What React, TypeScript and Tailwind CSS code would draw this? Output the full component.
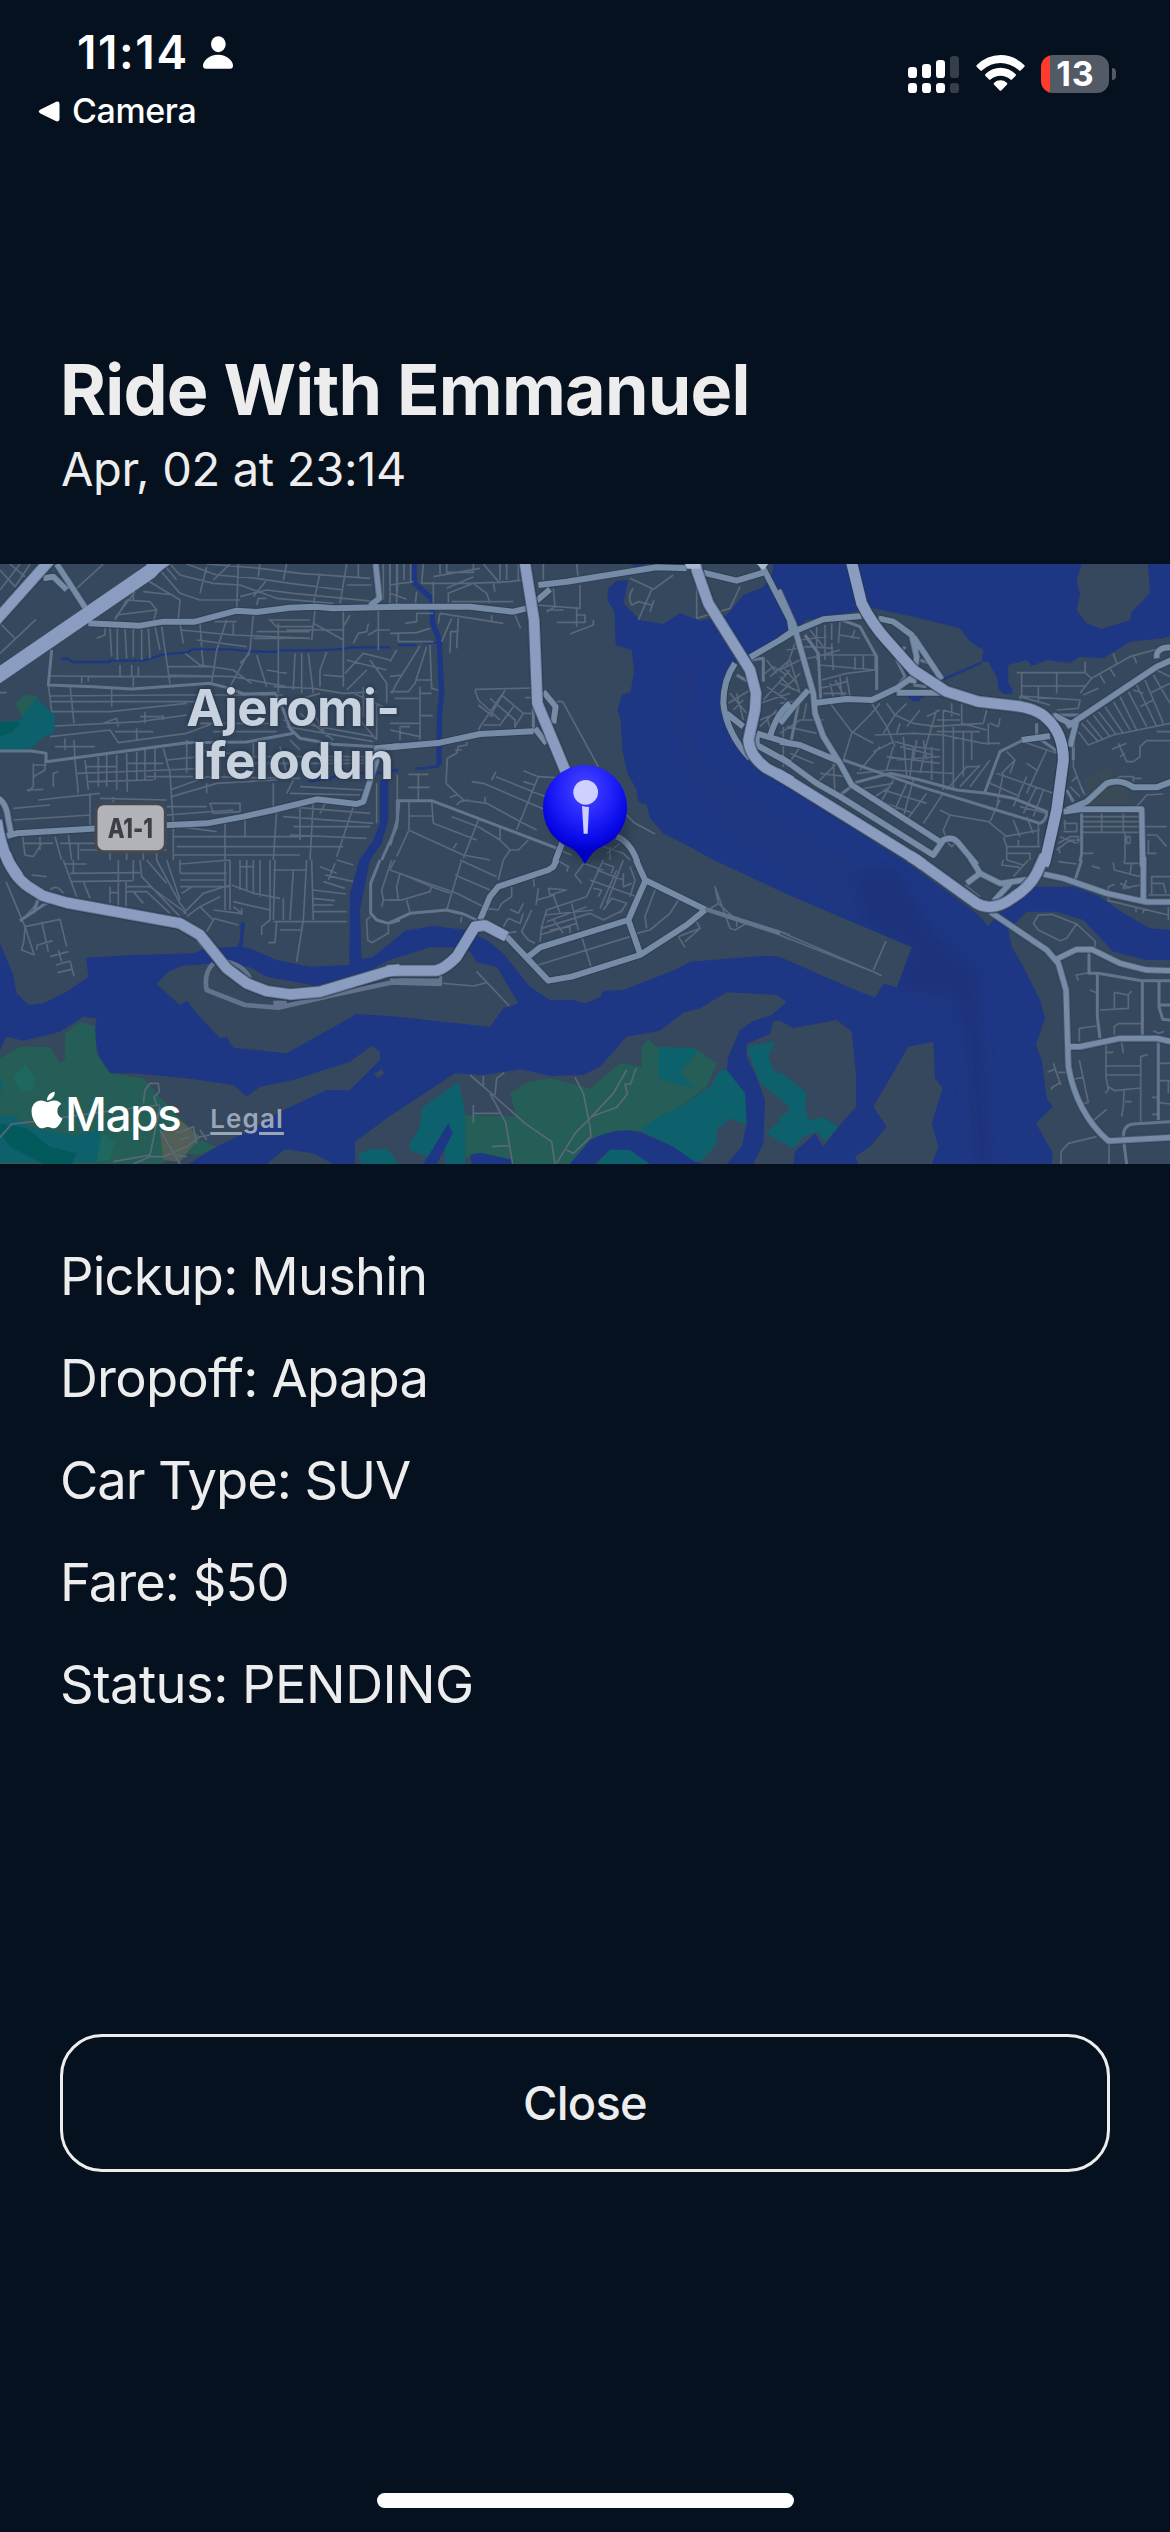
import { FaApple } from "react-icons/fa";

const LAND = "#36485d";
const WATER = "#1e3785";

// Map geometry is stored in sectors; every sector keeps its own local origin.
type Sector = {
  dx: number;
  dy: number;
  creeks?: string;
  green?: string;
  teal?: string;
  darkTeal?: string;
  sand?: string;
  lightGreen?: string;
  ponds?: string;
  lane: string;
  street: string;
  avenue: string;
  highway: string;
};

const sectors: Sector[] = [
  {
    dx: 0,
    dy: -12,
    creeks:
      "M183 296 L203 297 L220 306 H330 V302 H430 L490 283 L560 278 L580 268 H695 L750 274 L830 276 L835 271 H950 L1030 267 L1055 262 H1170 M925 665 L990 655 L1040 638 L1130 640 L1195 630",
    teal: "M0 485 L60 480 L110 415 L165 465 V490 L160 520 L130 530 L95 565 L0 580Z",
    green: "M45 430 L75 405 L110 408 L120 425 L105 450 L100 480 L75 482Z",
    darkTeal: "M0 485 H62 L38 515 L0 530Z",
    lane:
      "M0 30 L45 80 L90 12 M60 12 L0 90 M30 12 L75 50 M230 85 L310 12 M0 280 L108 178 M0 190 L45 235 M0 398 H20 " +
      "M510 12 L540 45 L640 70 L720 75 L830 115 L1000 130 M560 12 L650 45 L770 55 L870 70 L1030 90 M620 12 L780 25 L900 40 L1110 55 M480 30 L540 100 L600 120 H720 M715 12 L710 150 M780 12 L775 50 M1040 12 L1020 130 M960 40 L940 130 M860 12 L850 60 M440 60 L540 120 L535 180 M405 95 L345 175 M345 180 L380 120 L450 125 L470 150 L350 165 M400 90 V120 M470 150 L460 185 M720 110 L800 90 L880 100 L1130 125 M800 60 L760 110 M600 100 L620 20 M1150 12 V120 M1170 12 V140 M1190 12 V140 M430 95 L520 105 M490 12 L530 60 M690 12 L640 60 M770 135 L775 115 H800 M1040 75 H1115 M1075 12 V50 " +
      "M330 205 L335 290 M352 205 V300 M375 205 L380 295 M400 205 V290 M425 205 V300 M445 205 L450 295 M465 200 L480 270 M485 200 L510 372 M540 190 L550 250 M290 235 L315 225 V205 M540 210 L700 225 L930 235 M600 190 L605 260 M590 240 L740 260 M680 180 L650 270 L635 370 M760 165 L750 270 L690 380 M805 180 H930 M835 190 V400 M945 150 L935 240 M810 180 L830 200 H940 M1030 140 V380 M860 210 H1030 M940 190 L1030 240 M1050 165 L1030 200 M770 215 H930 M1170 210 H1130 L1105 225 M1135 140 V270 M1105 190 L1100 215 L1075 220 L1060 250 M645 185 H710 M700 190 V225 M760 235 H850 " +
      "M150 348 L500 350 L640 350 M210 375 L222 490 M335 385 V440 M148 408 L500 405 L850 405 M150 425 L600 425 M155 455 L330 455 L560 430 M165 498 L420 485 L560 465 M150 530 L330 510 L355 548 L560 520 L640 490 M145 375 L155 455 M400 350 V380 M265 350 V365 M245 350 V370 M500 320 H640 M505 345 L700 350 L860 380 M360 315 V350 M395 315 V350 M415 320 V350 M605 270 L610 320 M555 280 L600 315 L700 330 L740 360 L755 370 M770 285 L800 380 M885 280 L880 390 M905 280 V400 M925 280 L940 400 M980 275 L960 330 V380 M820 380 L940 385 L1030 400 L1130 395 M1040 300 L1160 330 M1035 340 L1090 280 L1170 300 M970 345 L1030 350 M1110 300 L1160 370 V430 M1040 390 L1100 330 M800 330 L860 340 M720 310 L750 280 M1060 400 L1150 440 M1090 380 V470 M420 470 H490 M435 455 V490 M310 490 L350 475 L355 500 M410 505 V540 M345 515 H460 M490 465 V480 " +
      "M100 610 V680 L85 695 M100 615 H140 M100 650 L135 630 V605 M160 680 V640 L175 635 M222 540 L225 600 L235 700 M165 560 H285 M195 535 V570 M255 600 L265 690 M295 590 V680 M320 585 V680 M350 585 V690 M380 580 L382 695 M410 575 V660 M435 570 V660 M465 565 V660 M490 565 L510 640 L515 720 M230 640 L500 630 L600 625 M265 665 L460 660 M115 720 L300 700 M80 690 L130 688 M440 650 L580 650 M510 690 L620 650 L900 655 M515 710 L650 670 L830 660 M270 700 V800 M40 745 L150 735 M40 780 L270 765 M500 740 L620 740 M630 730 H720 V755 L640 760Z M820 670 V750 M515 720 L520 790 M255 620 H350 M380 610 H490 M500 600 L600 590 M340 710 V735 M500 765 L700 750 M300 715 L500 720 M560 540 V640 M620 670 V700 " +
      "M68 830 L75 885 L100 890 M68 850 H160 M120 830 V870 M165 830 L185 900 M205 825 L215 900 M180 850 H500 M240 870 H500 M235 850 V900 M330 850 V900 M380 850 V900 M430 850 V900 M470 850 V900 M520 800 V900 M520 830 H900 M530 860 H1030 M520 885 H900 M675 790 V900 M735 780 V830 M830 755 L820 900 M900 745 V840 M940 725 L930 900 M860 740 L1110 760 M850 770 L1120 790 M880 800 H1110 M870 825 L1100 835 M980 720 L960 760 M1060 740 L1010 890 M1130 670 V790 M100 890 L125 850 M540 800 L650 815 " +
      "M900 680 L1090 690 M870 700 L1080 705 M880 660 L860 700 M600 490 H820 M640 515 H830 M730 590 H1120 M740 610 H1120 M850 480 L1120 530 M860 500 L1120 545 M960 560 V600 M870 540 L900 570 M1080 480 L1130 540 M900 460 L1000 540 M930 440 L980 530 M600 570 L760 590 M1130 430 V540 M660 560 V640 M760 550 V640 M840 560 L860 640 M980 600 H1130 M890 420 L960 400",
    street:
      "M155 270 L145 375 L280 380 L395 387 L630 370 L690 385 L730 402 L825 400 L850 450 L870 505 L900 535 L1000 553 L1130 560 M0 573 H95 L138 580 V605 L560 548 L740 546 L880 520 M1197 720 L1190 800 L1145 900",
    avenue:
      "M255 142 L205 65 L170 12 M130 55 L160 50 L200 90 M265 190 L420 197 L490 185 L585 185 L710 152 L770 156 L870 143 L945 140 L1000 145 L1200 140 M1127 12 L1138 115 L1110 137 M20 828 L50 820 L300 805 L620 790 L730 770 L820 750 L950 718 L1070 732 L1090 725 L1130 600 V565 L1200 558 M-5 715 Q20 730 25 780 L35 830",
    highway: "M500 0 L450 35 L0 343 L-20 357 M150 0 L0 168 L-20 190 M-10 780 Q0 850 25 905 L55 950",
  },
  {
    dx: 1170,
    dy: -12,
    creeks:
      "M147 618 L100 625 H75 M0 630 H22 M25 255 H80 M100 248 H145",
    lane:
      "M0 12 V70 M22 12 V100 M42 12 V60 M62 12 V70 M100 12 L95 70 H240 L360 65 L400 60 M130 65 V135 M130 50 L270 25 M150 12 V42 M170 12 V37 H250 V12 M175 130 V100 L250 70 L290 100 L300 130 M170 85 L250 50 M280 12 L330 70 M330 12 V60 M350 12 V60 M385 12 V60 M0 75 L70 65 M0 100 L50 118 M80 95 L75 140 M185 125 H370 M310 70 L315 95 " +
      "M0 220 L80 218 L120 205 M25 245 H130 M25 222 V245 M45 190 L80 185 V160 H130 M150 160 L340 190 M305 165 V185 M375 165 L392 205 M205 170 L200 265 M185 175 L155 245 M180 280 L182 215 H205 M150 160 L145 190 M0 305 L20 270 M90 258 L20 370 L5 400 M110 260 L75 370 L55 395 H0 M120 255 L125 385 L145 390 M90 380 V540 M15 415 H90 M0 490 H90 M90 400 H125 M90 467 H128 M30 500 V540 M0 510 L90 530 M75 360 H125 M0 350 L35 345 M30 500 H60 " +
      "M255 388 L425 384 M255 390 L265 420 L330 480 M300 415 L375 480 V505 M335 405 L400 460 H425 M335 405 L270 500 L265 512 M370 440 L330 495 H280 M400 460 L375 500 M265 435 L310 470 M345 390 L300 470 M405 413 H425 M500 425 H518 L625 620 M540 222 L610 195 V180 M560 140 V200 M500 187 H585 V165 H560 M440 135 L570 145 V75 M470 150 H520 M460 12 V60 M560 12 L565 60 M490 85 L495 140 L470 155 M720 55 L790 88 L850 45 M785 88 L745 180 M730 85 Q710 110 725 135 L745 125 L785 135 M792 120 L780 155 M920 70 V175 L1020 145 L1050 80 " +
      "M22 645 V720 M85 645 V720 M55 643 H115 M55 682 H118 M57 725 V810 L20 890 M125 725 L130 790 L260 840 M60 768 H125 M60 812 L220 885 L300 900 M185 770 L265 800 L330 840 M330 800 V840 L360 870 H385 L415 840 M265 780 L220 895 M360 870 L340 900 M230 545 V555 L205 560 L200 580 L172 595 L168 670 L220 720 L290 730 L400 790 L440 810 M245 665 L280 670 L480 755 M305 660 L318 635 M318 650 L440 700 L480 715 M400 632 L445 650 L380 810 M445 650 L540 655 M400 665 L435 675 M200 735 L210 725 L240 720 M285 710 V730 M180 712 L200 705 M195 570 H215 M200 850 L190 865 M460 850 L545 885 M710 765 L735 790 L795 822 M640 860 L700 880 L720 900 M650 880 L690 850 M660 860 V900 " +
      "M1120 420 L1200 330 M1130 380 L1190 420 M1140 350 L1200 300 M1110 480 L1200 440 M1015 430 L1080 390 M1020 400 L1070 460 M1040 400 L1060 480 M1110 500 L1160 450 M1130 470 L1150 540 M1180 500 V620 M1125 340 L1150 320 L1190 345 M1110 430 L1200 400 M1030 450 L1060 420 M1130 300 L1160 340",
    street:
      "M0 855 L22 780 V722 H125 L330 800 L510 868 M1085 300 L1120 295 V365 M1040 345 L1075 365 M430 440 V520",
    avenue:
      "M0 140 H240 L370 155 L410 145 M0 562 L150 548 L270 522 L430 514 M445 75 L530 65 L800 22 L890 25 M440 122 L480 88 M940 38 L1040 62 L1130 35 M1115 15 L1200 180 L1205 215 L1170 240 L1080 292 M1035 310 Q1000 360 1000 430 Q1010 520 1080 595 M1200 430 Q1160 460 1140 530 M1100 520 L1200 550 M1100 520 V555 L1200 610 M1010 460 L1060 500 M460 395 L497 440 L490 490 M435 505 L470 550 M518 845 L495 905 M680 830 Q720 845 742 905",
    highway:
      "M403 0 L432 180 L442 430 L525 630 L545 670 M915 0 L920 30 L955 130 L1080 330 L1098 400 L1095 450 L1075 540 Q1080 590 1130 625 L1205 665",
  },
  {
    dx: 2340,
    dy: -12,
    creeks: "M490 358 L605 308 M345 403 H440 M385 412 H430 M395 420 H420",
    sand: "",
    lane:
      "M0 330 L60 300 L110 290 L180 270 M20 270 L80 260 L160 265 M0 370 L70 400 M0 400 L60 340 M30 300 L60 400 M60 240 L140 230 M90 210 L130 260 M110 200 V300 M135 195 V300 M155 190 V240 M180 185 L175 250 M180 225 L240 235 M215 235 L225 210 M120 285 H285 M120 315 L285 330 M125 360 L200 340 L285 330 M120 385 L200 365 M150 370 L160 410 M200 350 L210 410 M130 400 L200 400 M285 285 V330 M225 290 V330 M250 285 V330 M155 250 L160 330 M165 360 L195 410 M180 350 L185 410 M0 350 L40 390 M10 320 L50 370 M45 250 L20 320 " +
      "M0 520 L60 480 L130 480 M20 500 L110 520 M0 430 L70 420 M30 580 L100 610 M60 560 L20 620 M110 670 L180 600 M160 610 L165 700 M120 640 L200 650 M80 430 L70 480 " +
      "M150 430 L215 515 L280 550 M215 520 L270 465 M215 520 L190 600 M275 430 L320 500 L345 560 M320 430 L345 465 L400 490 L470 500 M380 430 L345 465 L310 520 M300 430 L270 465 M285 525 L400 520 L490 525 L610 550 H660 M490 450 V690 M470 450 L440 550 L420 640 M520 500 V690 M545 430 V490 L620 510 M550 515 V650 M575 515 V600 M490 450 L540 465 M450 500 L610 490 M470 515 H600 M625 490 V555 M620 450 L610 490 M630 490 L655 500 L660 475 M345 545 L400 560 L480 570 M320 590 L400 600 L480 610 M340 560 L320 630 M370 530 L380 650 M400 560 L390 650 M430 540 L440 600 M280 575 L340 545 M360 560 L460 585 M350 600 L480 590 M410 540 L400 600 M500 690 L560 620 H600 M540 680 L600 615 M570 680 L630 600 M240 630 L300 560 M230 640 L330 630 L520 640 M440 470 L480 450 M470 480 H540 M515 430 V470 M360 490 L350 520 M455 560 V660 M420 450 L380 500 " +
      "M225 690 L340 670 M300 730 L340 660 M270 720 L330 680 M340 760 L380 670 M380 780 L440 700 M290 720 L400 760 M310 690 L440 730 M400 660 L370 770 M430 790 L490 700 M510 765 L625 785 L680 830 M510 765 L490 810 L500 840 M480 750 L510 765 M670 830 L680 860 V900 M680 860 H780 M675 830 L780 810 M715 840 V860 M700 780 L720 830 M740 770 L760 820 M680 880 H750 V900 M630 785 L660 720 M650 640 L820 700 M630 670 L720 710 M670 640 L650 740 M705 600 L665 640 M680 575 L705 600 L690 640 M740 610 L770 630 M800 570 L740 700 M740 650 L700 740 M770 680 L730 760 M790 690 L760 770 M730 545 L830 580 M720 740 L800 760 M495 840 L515 860 L530 845 M775 790 V860 " +
      "M710 338 H915 L935 355 L900 400 M725 340 V410 M725 378 H915 M830 338 V400 M775 380 V430 M720 420 V408 L900 420 L895 445 L830 450 M720 410 L810 435 M935 355 L1050 290 L1150 262 M1000 280 L1010 310 M1060 285 L1070 310 M960 345 L975 370 M990 325 L1005 350 M915 338 V305 M910 405 L955 385 " +
      "M905 490 L955 545 M925 555 L1000 525 L1170 490 M920 480 L970 540 M940 465 L990 530 M955 455 L1010 525 M975 440 L1030 520 M1000 425 L1050 510 M1020 410 L1070 510 M1045 395 L1100 500 M1070 375 L1130 500 M1095 360 L1150 490 M1120 345 L1170 430 M895 515 L925 555 M1060 390 L1090 400 M1110 400 L1170 370 M1080 440 L1120 420 M1130 330 L1170 350 M1130 515 H1170 M995 568 L1040 550 M1020 590 L1035 580 M1015 550 L1040 605 L1060 605 L1080 590 V560 L1100 542 H1170 M880 560 V620 L910 700 M1005 660 L1020 650 H1060 V665 M1060 655 H1085 M870 680 L900 710 M875 665 L890 650 L915 705 " +
      "M900 770 H1080 M900 785 H1080 M900 800 H1080 M900 817 H1080 M965 760 V817 M1030 760 V817 M1035 820 V900 M850 790 H890 V815 H850 M855 780 V810 M840 830 L890 850 M830 870 L870 840 H900 M835 850 L870 830 H895 V850 M1040 830 H1050 V850 H1040Z M1095 800 H1160 M1100 825 H1130 L1160 860 M910 880 H940 M1100 880 H1130 M1070 740 L1100 705 L1150 702 M1105 840 V880 M840 880 L835 860",
    street:
      "M185 180 L240 200 L290 290 V390 M75 225 L115 280 L122 420 M190 600 L290 635 L420 680 L600 735 L780 790 Q800 780 800 755 L700 715 L620 700 L530 690 L420 660 L330 640 L225 668 M615 695 L660 575 L730 540 M905 760 V880 L900 905 M60 410 L30 560 M180 705 L220 675 M375 260 L350 300 L375 350 L350 380 M420 300 L450 310 L480 350 M400 375 L440 380 M770 490 V530 L840 580 M815 465 H920 M880 500 V600 M860 690 L880 725",
    avenue:
      "M-5 90 L40 190 L80 330 L100 400 L105 460 L130 530 L180 610 L215 675 L480 845 M0 240 L40 215 L130 178 L245 168 M295 175 L340 185 L395 225 L410 290 L400 370 M400 230 L440 290 L485 358 M110 428 L200 417 L275 420 L350 385 L400 350 M350 398 H485 M85 390 L40 440 L0 490 M0 545 L60 555 L180 605 M0 590 L110 670 L180 710 L460 885 L490 840 Q520 825 540 855 L590 915 M1175 300 L1130 320 L860 500 M1130 295 Q1125 262 1175 262 M725 540 L810 528 M890 480 L870 560 M820 465 L870 490 M850 755 L900 748 H1085 L1088 920 M860 750 L920 725 L980 670 Q1020 655 1060 682 H1130 L1175 665",
    highway:
      "M-10 640 L0 646 L410 900 L430 915 M213 0 L245 130 Q275 190 320 240 L400 330 L500 395 L595 425 L700 437 Q770 445 800 475 Q850 520 850 600 L830 750 L795 905 L790 915",
  },
  {
    dx: 0,
    dy: 888,
    green:
      "M0 595 L60 560 L150 560 L180 610 L195 600 V520 L240 485 L285 500 L290 580 L330 640 L430 655 L480 710 L545 780 L600 840 L650 860 L600 885 L550 880 L480 912 H0Z",
    teal:
      "M0 765 L50 770 L80 800 L240 830 L300 850 L290 905 H0Z M0 650 L10 680 L0 700Z M200 830 L300 810 L300 880 L180 870Z M1075 880 L1110 868 H1165 L1195 912 H1085Z",
    darkTeal: "M0 790 L80 805 L150 860 L230 880 L215 912 H130 L30 860 L0 820Z",
    lightGreen: "M40 650 L75 615 L105 650 L100 690 L60 695Z M310 820 L345 850 L330 900 L290 905 L300 850Z",
    sand: "M480 820 L540 780 L600 830 L540 905 L490 900Z",
    lane:
      "M190 0 L230 110 M220 0 V40 M190 12 H260 M210 40 L420 38 M210 65 L400 62 M250 65 L270 115 M355 40 V140 M378 60 V140 M330 80 V130 M330 98 H355 M400 0 V60 M355 0 V40 M380 80 H450 L560 160 M420 0 L425 50 L540 170 M380 95 H440 L510 160 M400 95 L430 130 M440 0 L500 70 M470 0 L540 130 L555 150 M500 0 L540 120 M540 12 L690 0 M540 40 H680 M540 60 H680 M540 80 H690 M545 100 L580 78 M550 160 L610 100 L690 75 M560 170 L600 140 L660 110 M600 140 L640 180 L620 215 M675 0 V150 M690 0 V150 M720 0 V90 M740 0 V90 M720 20 H760 M760 0 V100 M780 0 V110 M810 0 V180 L785 200 V225 M695 75 L760 100 L840 115 M700 125 L810 150 M700 140 L725 160 M725 145 V165 M640 150 L720 160 M640 175 L715 195 M820 30 H920 M825 0 L820 180 M850 115 V180 M880 30 L870 180 M920 0 L910 180 L890 305 M935 0 L940 180 M820 185 H1040 M830 185 L825 248 H805 M840 210 H905 M940 155 H1040 M940 135 H1000 M940 115 L1005 122 M940 90 L1038 102 M970 65 L1035 85 M975 45 L1060 65 M960 20 L1010 40 M1010 0 L1060 15 M1005 10 L985 60 M540 0 V40 M590 240 L605 262 " +
      "M18 65 L75 200 L103 285 M62 185 L120 120 M75 200 L180 178 L200 260 M125 185 L145 275 M110 270 L112 255 L158 242 M150 290 L205 275 M175 270 L185 305 M168 315 L210 303 L222 348 M172 338 L215 328 M75 200 L72 240 L65 270 L103 285 M95 45 L140 50 M150 90 Q170 70 190 100 M1165 195 V220 L1115 248 L1103 240 L1100 180 L1112 168 M1175 0 L1145 90 L1150 120 H1200 M1150 120 L1145 140 " +
      "M0 832 L35 792 L100 785 L350 750 L480 735 M430 730 L435 690 L450 670 H475 L478 695 L462 712 L470 735 M480 740 L450 885 L340 905 M450 890 L400 912 M480 810 L540 912 M450 890 H490 L560 860 L600 830 L630 825 M530 820 L580 800 L590 850 M540 840 L570 830 M600 810 L620 840 M530 885 L560 890",
    street:
      "M1140 0 L1112 70 V160 L1130 180 L1165 190 L1200 180 M100 160 L115 115 M60 182 L130 135 L150 125",
    avenue: "",
    highway: "M15 -20 Q40 50 85 80 L130 108 L200 128 L540 190 L600 225 L680 325 L740 370 L800 393 L870 403 L960 395 L1170 332 L1200 328",
  },
  {
    dx: 1170,
    dy: 888,
    green:
      "M360 700 L410 668 L480 655 L600 685 L690 610 L755 620 V560 L775 538 L800 560 L915 565 L980 610 L950 680 L870 740 L750 812 L680 815 L610 835 L540 912 H365 L300 890 H222 V765 L380 770Z",
    teal:
      "M805 563 H915 L920 580 L870 635 L910 685 L805 655Z M750 812 L800 775 L870 740 L960 680 L990 630 L1010 630 L1065 700 L1070 795 L1020 775 L980 810 V850 L940 900 L900 905 L850 860Z M58 850 L90 800 L95 745 L205 665 L225 750 V912 H165 V870 L110 890 L60 870Z M1070 560 L1155 543 L1135 590 L1150 630 L1200 660 V740 L1110 670Z M1200 755 L1128 820 L1200 860Z M620 912 L660 870 L720 868 L780 912Z M-5 870 L25 912 H-5Z",
    ponds:
      "M540 912 L600 840 Q690 795 760 820 L850 860 L915 905 L940 912 H780 L720 870 L660 868 L615 912Z M100 912 L175 790 L188 820 L140 912Z M240 885 L270 878 L370 900 V912 H245Z",
    lane:
      "M0 30 L200 100 L300 150 M215 0 L170 150 M340 0 L325 60 M210 0 L320 50 M0 120 H35 L120 95 L125 80 M50 120 L60 158 M30 40 L20 80 L25 120 M195 45 L300 90 M30 40 L125 80 L180 100 M0 28 L15 0 M365 80 V110 L335 130 L325 150 L295 145 M430 55 L433 80 M445 85 L438 135 M400 130 L385 160 L360 148 M425 150 L395 215 L415 240 L435 250 M340 200 L355 175 L390 190 L400 160 M350 220 L380 215 M475 85 L530 90 L480 105Z M490 105 L510 160 M440 120 L495 105 M450 245 L455 200 L470 150 L590 110 M465 165 L610 150 M490 180 L520 220 M455 205 L600 160 L640 180 L700 150 M545 130 L565 210 M480 210 L540 200 V220 M470 185 L590 140 M450 225 L560 190 M500 0 L535 20 L530 35 M580 12 L555 45 L575 70 M590 110 L640 0 M600 60 L740 110 M620 30 L700 60 M650 130 L700 0 M630 145 L680 30 M610 85 L635 90 L625 110 M640 150 L665 115 L710 130 L690 160 M700 40 V80 L725 70 M720 20 L735 60 L720 110 M640 10 L670 20 L665 40 M580 10 L640 30 " +
      "M445 315 L720 230 M575 230 L603 320 M740 220 L780 210 L840 160 L865 120 M770 205 L765 170 L795 90 M865 230 L885 262 M865 230 L930 205 L920 185 M885 245 L930 205 M955 150 L985 130 L975 80 L1020 205 L1035 210 L1070 190 M985 130 L1040 180 V200 M260 335 L358 438 M160 370 L250 378 L290 368 M215 170 L212 188 M1160 210 L1200 225 M1150 215 L1200 238 " +
      "M240 645 L315 710 L405 790 L485 845 L495 912 M280 648 V680 M300 700 L347 788 L368 912 M315 705 L320 655 L343 638 M250 735 V790 M250 760 H330 M305 860 L355 857 M555 652 L580 700 L600 800 L603 830 L550 880 L530 870 M500 910 L555 820 L600 775 L670 700 L710 630 M600 772 L680 742 L712 702 L705 672 H722 L738 625",
    street: "M0 188 L60 160 L170 150 L220 162 L260 180 M0 360 H155 M0 370 L155 374 M152 345 V375 M945 145 L1165 215 M950 148 L1165 218",
    avenue:
      "M500 0 L490 20 L475 30 L325 80 L300 110 L270 180 M350 230 L475 362 L545 350 L750 285 L890 195 L945 150 M738 0 L765 60 L945 148 M765 65 L715 180 L750 280 M715 180 L450 262 L412 292",
    highway: "M-10 332 H135 Q160 330 200 290 L255 200 L285 196 L350 230",
  },
  {
    dx: 2340,
    dy: 888,
    teal: "M0 635 L80 700 L75 745 L85 780 L130 772 L175 800 L135 843 L110 815 L70 830 L40 865 L0 845 V770 L30 750 L0 700Z",
    lane:
      "M0 215 L280 335 L305 347 M0 226 L280 335 M280 330 L318 243 M760 190 L775 165 L815 163 L890 192 L860 235 L840 242 L775 210Z M890 192 L945 243 V268 M555 75 L600 110 M670 0 L665 15 L720 22 M680 0 L730 15 M700 50 L745 0 M835 5 L890 12 M935 18 L960 25 M1000 8 L1003 30 L1080 50 M1050 40 L1055 10 M1033 0 V10 H1085 M985 125 V80 L1005 73 M1020 70 L1050 85 M1040 60 L1030 85 L1080 75 M985 122 L1060 140 L1165 165 M1068 145 V157 M1090 148 V160 M1115 105 V50 H1170 M1115 70 H1150 L1158 100 M1105 105 H1170 M1165 140 V180 " +
      "M895 362 L888 345 L930 338 M1003 445 V397 L1045 405 V445 L960 450 M1045 405 L1055 393 M930 390 L950 398 M898 545 V505 L950 498 M1003 525 V500 L1015 491 H1085 M978 550 V650 L985 690 L975 700 M980 577 H1000 M1025 548 L1030 580 M980 618 H1080 M980 645 H1080 M985 680 L1005 692 L1080 684 M1082 785 V590 L1103 584 M1032 692 L1030 740 L1025 770 M1035 725 H1055 M1140 610 H1170 M1140 662 H1170 M1115 712 H1135 M1115 763 H1135 M1140 728 L1170 732 M898 600 L925 727 L905 732 M880 657 L908 653 M930 790 L980 748 M820 610 L842 675 M802 637 L825 628 M835 637 H860 M815 690 V683 L840 668 M843 912 V875 L865 850 L950 830 M987 850 V912 M1120 512 L1135 520 L1152 515 M1165 665 V700",
    street:
      "M885 60 L905 0 M927 275 V340 L955 340 L1085 362 H1170 M952 340 V470 L960 535 M1087 360 V530 M1137 365 V440 L1148 478 L1170 480 M1140 435 H1170 M1135 545 V780 M1030 830 Q1030 795 1060 792 L1170 785 M1032 850 L1040 912",
    avenue:
      "M572 -5 L600 40 L660 70 L745 58 M560 70 L600 40 M640 125 L690 70 M790 42 L850 55 L980 100 L1100 126 H1175 M1090 -10 V120 M630 155 L800 270 L835 310 L858 390 L865 620 Q890 760 985 843 L1175 832 M830 297 L890 268 H935 L1020 310 L1100 330 L1175 332 M870 560 H900 L1020 535 H1130 L1175 545",
    highway: "M390 -12 L410 0 L590 130 Q640 158 700 112 Q750 80 770 40 L795 -15",
  },
];

const lagoon =
  "1885,48 1850,50 1825,73 1822,108 1843,143 1847,243 1895,258 1902,318 1892,383 1865,393 1853,438 1862,468 1867,558 1882,628 1910,678 1915,713 1940,723 1950,763 1990,808 2070,848 2140,888 2370,995 2735,1150 2690,1270 2650,1258 2625,1300 2580,1283 2340,1178 2290,1175 2070,1193 2030,1215 1870,1278 1810,1280 1800,1300 1755,1318 1720,1308 1650,1308 1590,1268 1510,1168 1460,1128 1398,1098 1300,1086 1215,1100 1170,1138 1120,1178 1085,1186 1080,1038 1110,888 1145,838 1165,768 1165,648 1140,648 1140,778 1120,828 1078,888 1050,988 1048,1203 930,1208 830,1188 750,1153 728,1148 735,1075 722,1075 720,1125 712,1148 620,1153 580,1168 400,1173 258,1181 265,1238 200,1283 130,1318 85,1323 50,1288 40,1233 0,1138 0,1458 20,1418 70,1430 180,1403 250,1358 290,1363 282,1418 300,1488 330,1528 400,1528 560,1543 700,1563 740,1598 780,1568 880,1548 1050,1493 1115,1445 1140,1463 1140,1488 1050,1578 980,1578 850,1638 740,1703 650,1748 565,1800 800,1800 855,1756 940,1768 1000,1800 1065,1800 1065,1733 1170,1656 1365,1528 1450,1533 1565,1516 1650,1536 1750,1533 1800,1508 1880,1418 1980,1400 2050,1346 2100,1333 2180,1285 2330,1293 2360,1313 2315,1353 2255,1373 2220,1398 2185,1478 2180,1518 2235,1588 2240,1678 2225,1748 2180,1800 2260,1800 2290,1738 2295,1608 2265,1528 2240,1478 2240,1440 2310,1410 2320,1370 2340,1370 2380,1393 2510,1368 2555,1403 2568,1528 2568,1628 2520,1683 2470,1748 2445,1708 2385,1763 2380,1800 2575,1800 2565,1778 2610,1748 2660,1688 2620,1628 2725,1448 2800,1433 2805,1543 2828,1573 2795,1678 2815,1748 2795,1800 3155,1800 3158,1768 3108,1678 3158,1628 3140,1603 3125,1488 3108,1443 3135,1363 3120,1308 3070,1208 3035,1148 3025,1098 3080,1043 3170,1043 3250,1068 3340,1163 3440,1188 3510,1188 3510,1098 3450,1093 3370,1048 3300,998 3220,968 3100,968 2990,1053 2965,1086 2930,1048 2720,895 2340,655 2250,593 2200,528 2160,438 2170,338 2210,293 2130,163 2100,170 2040,148 1990,180 1920,168 1870,118";

const harbour =
  "2320,0 2315,33 2290,70 2230,93 2180,153 2145,165 2210,290 2250,278 2360,218 2420,168 2560,143 2620,133 2740,158 2880,193 2910,233 2950,258 2945,293 2965,293 2990,338 2995,373 3010,390 3037,390 3037,375 3025,358 3025,303 3080,288 3095,306 3140,288 3210,296 3240,278 3310,283 3390,233 3490,223 3510,215 3510,0";

const island =
  "3245,0 3230,50 3240,90 3230,138 3260,178 3305,195 3390,168 3395,143 3450,88 3443,0";

const peninsula =
  "470,1260 505,1223 545,1206 650,1198 750,1210 800,1238 950,1266 1100,1223 1170,1188 1290,1150 1370,1150 1410,1163 1430,1195 1490,1208 1555,1318 1510,1333 1470,1388 1170,1356 1070,1350 860,1468 700,1451 680,1418 660,1423 590,1348 560,1310 540,1323";

type LayerKey = Exclude<keyof Sector, "dx" | "dy">;

function Layer({ k, stroke, width, fill, opacity }: { k: LayerKey; stroke?: string; width?: number; fill?: string; opacity?: number }) {
  return (
    <g fill={fill ?? "none"} stroke={stroke ?? "none"} strokeWidth={width} strokeLinejoin="round" opacity={opacity}>
      {sectors.map((s, i) =>
        s[k] ? <path key={i} d={s[k]} transform={`translate(${s.dx} ${s.dy})`} /> : null,
      )}
    </g>
  );
}

function RideMap() {
  return (
    <svg viewBox="0 0 3510 1800" className="block h-[600px] w-full" fontFamily="Inter, sans-serif">
      <defs>
        <radialGradient id="pin" cx="0.5" cy="0.25" r="0.62">
          <stop offset="0" stopColor="#4a4aff" />
          <stop offset="0.5" stopColor="#2222fb" />
          <stop offset="0.85" stopColor="#0808e6" />
          <stop offset="1" stopColor="#0000c4" />
        </radialGradient>
        <filter id="soft" x="-20%" y="-20%" width="140%" height="140%">
          <feGaussianBlur stdDeviation="14" />
        </filter>
      </defs>
      <rect width="3510" height="1800" fill={LAND} />
      <g fill={WATER}>
        <polygon points={lagoon} />
        <polygon points={harbour} />
        <path d="M1890 0 H1940 L1910 8Z" />
      </g>
      <g fill="#1e3079" filter="url(#soft)" opacity="0.75">
        <path d="M2000 350 L2060 260 L2100 330 L2075 470 L2110 600 L2500 860 L2690 930 L2810 1110 L2940 1230 L2990 1800 H2900 L2880 1350 L2690 1290 L2735 1150 L2580 1075 L2200 830 L2060 640Z" opacity="0.45" />
        <path d="M2560 930 L2680 910 L2800 1100 L2930 1220 L2970 1800 H2930 L2900 1400 L2860 1290 L2700 1270 L2735 1150 L2600 1080Z" />
      </g>
      <path d="M1243 0 V58 L1295 103 L1298 178 L1318 228 L1322 328 L1325 388 L1318 458 L1317 604" fill="none" stroke={WATER} strokeWidth="16" />
      <g fill={LAND}>
        <polygon points={island} />
        <polygon points={peninsula} />
        <path d="M1122 1530 L1145 1515 L1152 1528 L1135 1543Z" />
        <path d="M2140 888 L2370 995 L2735 1150 L2690 1270 L2650 1258 L2625 1300 L2580 1283 L2340 1178 L2140 1100Z" />
      </g>
      <path d="M3250 648 L3330 603 L3345 648 L3385 678 L3390 723 H3270Z" fill="#3a4a56" />
      <Layer k="green" fill="#245e56" />
      <Layer k="teal" fill="#0d616d" />
      <Layer k="darkTeal" fill="#035a5d" />
      <Layer k="lightGreen" fill="#1f685f" />
      <Layer k="sand" fill="#525f54" />
      <Layer k="ponds" fill={WATER} />
      <Layer k="creeks" stroke={WATER} width={7} />
      <Layer k="lane" stroke="#5a687b" width={5} />
      <Layer k="street" stroke="#64748d" width={9} />
      <g fill="none" strokeLinejoin="round">
        <path d="M640 1198 Q610 1228 620 1278 L735 1323 L835 1331 L1000 1293 L1200 1250 L1325 1253" stroke="#63738d" strokeWidth="14" />
        <path d="M680 1193 Q730 1203 750 1243 M2115 1035 L2340 1108" stroke="#63738d" strokeWidth="13" />
        <path d="M820 1310 H860 V1330 H820Z" fill="#63738d" />
      </g>
      <Layer k="avenue" stroke="#2b3a4e" width={24} opacity={0.6} />
      <Layer k="avenue" stroke="#768ba5" width={18} />
      <Layer k="highway" stroke="#29374b" width={40} opacity={0.8} />
      <Layer k="highway" stroke="#8a9dc0" width={33} />
      <path d="M490 -20 L450 23 L0 331 L-20 345" fill="none" stroke="#8a9dc0" strokeWidth="44" />
      <path d="M2055 0 H2100 V14 H2062Z M2270 0 H2305 L2290 18Z" fill="#a9b8d0" />

      <rect x="288" y="719" width="208" height="144" rx="24" fill="#b1b3b8" stroke="#47484d" strokeWidth="9" />
      <text x="323" y="822" fontSize="80" fontWeight="800" fill="#3b3f46" textLength="136" lengthAdjust="spacingAndGlyphs">A1-1</text>

      <ellipse cx="1780" cy="800" rx="105" ry="90" fill="#1a2638" opacity="0.45" filter="url(#soft)" />
      <path d="M1755 603 A126 126 0 0 1 1881 729 C1881 790 1846 832 1803 849 C1778 859 1768 882 1755 900 C1742 882 1732 859 1707 849 C1664 832 1629 790 1629 729 A126 126 0 0 1 1755 603Z" fill="url(#pin)" />
      <circle cx="1757" cy="685" r="37" fill="#d0d0ff" />
      <path d="M1746 726 L1757 728 L1767 729 L1763 809 H1751Z" fill="#cdcdff" />
    </svg>
  );
}

function StatusBar() {
  return (
    <div className="flex h-[140px] justify-between pr-[54px] pl-[38px] text-white">
      <div className="pt-[24px]">
        <div className="flex h-[56px] items-center pl-[39px]">
          <span className="text-[46px] leading-[56px] font-semibold tracking-[1.6px]">11:14</span>
          <svg viewBox="0 0 90 98" className="ml-[14px] h-[33px] w-[30px]" fill="currentColor">
            <ellipse cx="46" cy="24" rx="22" ry="24" />
            <path d="M45 56 C72 56 90 76 90 88 Q90 98 81 98 H9 Q0 98 0 88 C0 76 18 56 45 56Z" />
          </svg>
        </div>
        <div className="mt-[11px] flex h-[40px] items-center">
          <svg viewBox="0 0 64 64" className="h-[21px] w-[22px]" fill="currentColor">
            <path d="M6 26 L54 2 Q64 0 64 9 V55 Q64 64 54 62 L6 38 Q-4 32 6 26Z" />
          </svg>
          <span className="ml-[12px] text-[34px] leading-[40px] font-medium tracking-[-0.4px]">Camera</span>
        </div>
      </div>
      <div className="flex items-start pt-[55px]">
        <svg viewBox="0 0 153 111" className="mt-px h-[37px] w-[51px]" fill="currentColor">
          <rect x="0" y="33" width="27" height="33" rx="10" />
          <rect x="42" y="24" width="27" height="42" rx="10" />
          <rect x="84" y="12" width="27" height="54" rx="10" />
          <rect x="126" y="0" width="27" height="66" rx="10" fill="#363e49" />
          <rect x="0" y="81" width="27" height="30" rx="10" />
          <rect x="42" y="81" width="27" height="30" rx="10" />
          <rect x="84" y="81" width="27" height="30" rx="10" />
          <rect x="126" y="81" width="27" height="30" rx="10" fill="#363e49" />
        </svg>
        <svg viewBox="0 0 146 108" className="ml-[17px] h-[36px] w-[49px]" fill="currentColor">
          <path d="M2 30 Q33 0 73 0 T144 30 Q147 33 144 36 L134 46 Q131 49 128 46 Q103 24 73 24 T18 46 Q15 49 12 46 L2 36 Q-1 33 2 30Z" />
          <path d="M28 57 Q48 38 73 38 T118 57 Q121 60 118 63 L108 73 Q105 76 102 73 Q90 62 73 62 T44 73 Q41 76 38 73 L28 63 Q25 60 28 57Z" />
          <path d="M54 83 Q62 76 73 76 T92 83 Q95 86 92 89 L76 106 Q73 109 70 106 L54 89 Q51 86 54 83Z" />
        </svg>
        <div className="ml-[16px] flex items-center">
          <div className="flex h-[38px] w-[68px] items-center justify-center rounded-[12px] bg-linear-to-r from-[#ff3b30] from-[9px] to-[#525a65] to-[9px]">
            <span className="pl-px text-[34px] leading-[38px] font-bold tracking-[1px]">13</span>
          </div>
          <div className="ml-[3px] h-[12px] w-[4px] rounded-r-full bg-[#525a65]" />
        </div>
      </div>
    </div>
  );
}

const details = [
  { label: "Pickup", value: "Mushin", track: "tracking-[-0.85px]" },
  { label: "Dropoff", value: "Apapa", track: "tracking-[-0.78px]" },
  { label: "Car Type", value: "SUV", track: "tracking-[-1.07px]" },
  { label: "Fare", value: "$50", track: "tracking-[-0.96px]" },
  { label: "Status", value: "PENDING", track: "tracking-[-0.54px]" },
];

export default function App() {
  return (
    <div className="flex h-[2532px] w-[1170px] flex-col overflow-hidden bg-[#05111e] font-['Inter',sans-serif] text-[#ededee] [font-feature-settings:'calt'_0] [font-variant-ligatures:none]">
      <StatusBar />

      <header className="mt-[207px] px-[60px]">
        <h1 className="text-[70px] leading-[85px] font-bold tracking-[-0.78px]">Ride With Emmanuel</h1>
        <p className="mt-[8px] pl-px text-[47px] leading-[58px] tracking-[-0.31px]">Apr, 02 at 23:14</p>
      </header>

      <div className="relative mt-[66px] h-[600px]">
        <RideMap />
        <div className="absolute top-[117px] left-[172px] w-[242px] text-center text-[51px] leading-[53px] font-[650] text-[#c8d2de] [text-shadow:0_0_3px_#2c3b4f,0_0_3px_#2c3b4f,0_0_4px_#2c3b4f]">
          <p className="tracking-[-0.5px]">Ajeromi-</p>
          <p className="tracking-[-0.4px]">Ifelodun</p>
        </div>
        <div className="absolute bottom-[22px] left-[31px] flex items-center text-white">
          <FaApple className="mb-[8px] h-[42px] w-[32px]" />
          <span className="ml-[2px] text-[46px] leading-[56px] font-medium tracking-[-1.5px]">Maps</span>
          <span className="mt-[9px] ml-[30px] text-[26px] leading-[34px] font-semibold tracking-[1.1px] text-[#9aa5b5] underline decoration-[3px] underline-offset-[4px]">
            Legal
          </span>
        </div>
      </div>

      <ul className="mt-[61px] px-[60px]">
        {details.map((d) => (
          <li key={d.label} className={`h-[102px] text-[52.5px] leading-[102px] ${d.track}`}>
            {d.label}: {d.value}
          </li>
        ))}
      </ul>

      <button className="mx-[60px] mt-[299px] h-[138px] rounded-[42px] border-[3px] border-[#ededee] pt-px text-[47px] font-medium tracking-[-0.75px]">
        Close
      </button>

      <div className="mx-auto mt-[321px] h-[15px] w-[417px] rounded-full bg-white" />
    </div>
  );
}
